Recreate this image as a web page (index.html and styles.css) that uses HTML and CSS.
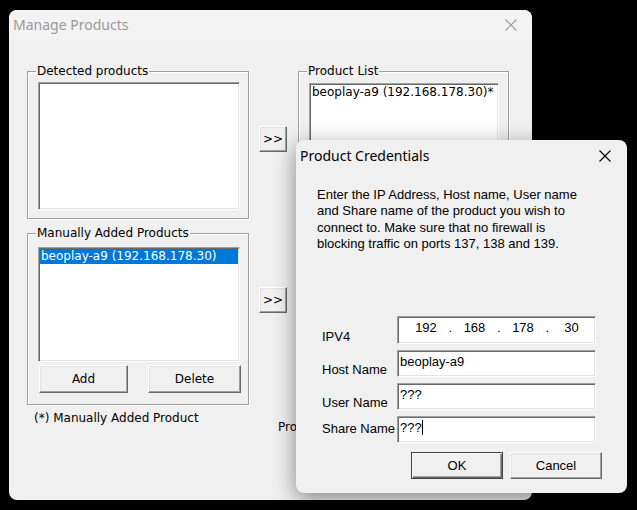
FILE: index.html
```html
<!DOCTYPE html>
<html>
<head>
<meta charset="utf-8">
<title>Manage Products</title>
<link rel="stylesheet" href="styles.css">
</head>
<body>
<div class="desktop">
  <div class="win main">
    <div class="titlebar">
      <span class="title">Manage Products</span>
      <svg class="close" viewBox="0 0 12 12"><path d="M0.5 0.5L11.5 11.5M11.5 0.5L0.5 11.5" stroke="#9a9a9a" stroke-width="1.1" fill="none"/></svg>
    </div>
    <div class="main-body">
      <div class="col-left">
        <div class="group g-detected">
          <span class="legend">Detected products</span>
          <div class="listbox lb-detected"></div>
        </div>
        <div class="group g-manual">
          <span class="legend">Manually Added Products</span>
          <div class="listbox lb-manual">
            <div class="item selected">beoplay-a9 (192.168.178.30)</div>
          </div>
          <div class="btn-row">
            <button class="btn btn-add">Add</button>
            <button class="btn btn-del">Delete</button>
          </div>
        </div>
        <div class="note">(*) Manually Added Product</div>
      </div>
      <div class="col-mid">
        <button class="btn arrow arrow-1">&gt;&gt;</button>
        <button class="btn arrow arrow-2">&gt;&gt;</button>
        <div class="status">Products</div>
      </div>
      <div class="col-right">
        <div class="group g-list">
          <span class="legend">Product List</span>
          <div class="listbox lb-list">
            <div class="item">beoplay-a9 (192.168.178.30)*</div>
          </div>
        </div>
      </div>
    </div>
  </div>

  <div class="win dialog">
    <div class="titlebar">
      <span class="title">Product Credentials</span>
      <svg class="close" viewBox="0 0 12 12"><path d="M0.5 0.5L11.5 11.5M11.5 0.5L0.5 11.5" stroke="#000" stroke-width="1.1" fill="none"/></svg>
    </div>
    <p class="dlg-text">Enter the IP Address, Host name, User name<br>and Share name of the product you wish to<br>connect to. Make sure that no firewall is<br>blocking traffic on ports 137, 138 and 139.</p>
    <div class="form">
      <label class="lbl">IPV4</label>
      <div class="field ip">
        <span class="seg">192</span><span class="dot">.</span><span class="seg">168</span><span class="dot">.</span><span class="seg">178</span><span class="dot">.</span><span class="seg">30</span>
      </div>
      <label class="lbl">Host Name</label>
      <div class="field">beoplay-a9</div>
      <label class="lbl">User Name</label>
      <div class="field">???</div>
      <label class="lbl lbl-last">Share Name</label>
      <div class="field">???<span class="caret"></span></div>
    </div>
    <div class="dlg-btns">
      <button class="dbtn default">OK</button>
      <button class="dbtn">Cancel</button>
    </div>
  </div>
</div>
</body>
</html>
```

FILE: styles.css
```css
* { box-sizing: border-box; }
html, body { margin: 0; padding: 0; }
body {
  background: #000;
  width: 637px;
  height: 510px;
  overflow: hidden;
  font-family: "DejaVu Sans", sans-serif;
  font-size: 12px;
  color: #000;
}
.desktop {
  position: relative;
  width: 637px;
  height: 510px;
  padding: 10px 0 0 9px;
}
.win {
  background: #f0f0f0;
  border-radius: 8px;
}
.main {
  width: 523px;
  height: 490px;
  overflow: hidden;
}
.titlebar {
  display: flex;
  align-items: center;
  justify-content: space-between;
  padding-left: 4px;
  font-family: "Noto Sans", sans-serif;
  font-size: 14px;
}
.main .titlebar {
  height: 30px;
  line-height: 30px;
  color: #999;
  background: #f3f3f3;
}
.close {
  width: 12px;
  height: 12px;
  margin-right: 15px;
}
.main-body {
  display: flex;
  padding: 31px 0 0 18px;
}
.col-left {
  width: 223px;
  margin-right: 9px;
  display: flex;
  flex-direction: column;
}
.col-mid {
  width: 28px;
  margin-right: 11px;
  display: flex;
  flex-direction: column;
}
.col-right { width: 211px; }

.group {
  position: relative;
  border: 1px solid #a0a0a0;
  box-shadow: inset 1px 1px 0 #fff, 1px 1px 0 #fff;
}
.legend {
  position: absolute;
  top: -8px;
  left: 8px;
  padding: 0 1px;
  background: #f0f0f0;
  line-height: 15px;
  white-space: nowrap;
}
.g-detected {
  width: 222px;
  height: 148px;
  padding: 10px 0 0 10px;
}
.g-manual {
  width: 222px;
  height: 172px;
  margin-top: 14px;
  padding: 13px 0 0 10px;
}
.g-list {
  width: 211px;
  height: 334px;
  padding: 11px 0 0 10px;
}
.listbox {
  background: #fff;
  border: 1px solid;
  border-color: #a0a0a0 #fff #fff #a0a0a0;
  box-shadow: inset 1px 1px 0 #696969, inset -1px -1px 0 #e3e3e3;
  padding: 1px;
}
.lb-detected { width: 202px; height: 128px; }
.lb-manual { width: 202px; height: 115px; }
.lb-list { width: 190px; height: 312px; }
.item {
  line-height: 15px;
  padding-left: 1px;
  white-space: nowrap;
}
.item.selected {
  background: #0078d7;
  color: #fff;
}
.btn-row {
  display: flex;
  margin-top: 3px;
}
.btn {
  font: inherit;
  color: #000;
  background: #f0f0f0;
  border: 1px solid;
  border-color: #fff #696969 #696969 #fff;
  box-shadow: inset -1px -1px 0 #a0a0a0, inset 1px 1px 0 #e3e3e3;
  padding: 0;
}
.btn-add { width: 89px; height: 28px; margin-left: 1px; }
.btn-del { width: 93px; height: 28px; margin-left: 20px; }
.note {
  margin-top: 6px;
  padding-left: 7px;
  line-height: 15px;
}
.arrow {
  width: 28px;
  height: 26px;
  line-height: 15px;
}
.arrow-1 { margin-top: 55px; }
.arrow-2 { margin-top: 135px; }
.status {
  margin-top: 107px;
  margin-left: 19px;
  width: 18px;
  overflow: hidden;
  line-height: 15px;
  white-space: nowrap;
}

/* dialog */
.dialog {
  position: absolute;
  left: 296px;
  top: 140px;
  width: 331px;
  height: 353px;
  box-shadow: 0 6px 22px rgba(0, 0, 0, 0.45);
  font-family: "Liberation Sans", Arial, sans-serif;
  font-size: 13px;
}
.dialog .titlebar {
  height: 32px;
  line-height: 32px;
  color: #000;
}
.dialog .close { margin-right: 16px; }
.dlg-text {
  margin: 15px 0 0 21px;
  line-height: 16.4px;
}
.form {
  display: grid;
  grid-template-columns: 75px 199px;
  grid-template-rows: 28px 27px 27px 27px;
  row-gap: 6px;
  margin: 63px 0 0 26px;
}
.lbl {
  align-self: end;
  line-height: 16.4px;
  margin-bottom: -2px;
  white-space: nowrap;
}
.lbl-last { margin-bottom: 5px; }
.field {
  background: #fff;
  border: 1px solid;
  border-color: #a0a0a0 #fff #fff #a0a0a0;
  box-shadow: inset 1px 1px 0 #696969, inset -1px -1px 0 #e3e3e3;
  padding: 3px 2px 0;
  line-height: 16.4px;
  white-space: nowrap;
}
.ip {
  display: flex;
  padding-left: 11px;
}
.seg { width: 34px; text-align: center; }
.dot { width: 14.5px; text-align: center; }
.caret {
  display: inline-block;
  width: 1px;
  height: 15px;
  background: #000;
  vertical-align: -3px;
}
.dlg-btns {
  display: flex;
  justify-content: flex-end;
  gap: 7px;
  margin: 9px 25px 0 0;
}
.dbtn {
  width: 92px;
  height: 27px;
  font: inherit;
  color: #000;
  background: #f0f0f0;
  border: 1px solid;
  border-color: #fff #696969 #696969 #fff;
  box-shadow: inset -1px -1px 0 #a0a0a0, inset 1px 1px 0 #e3e3e3;
  padding: 0;
}
.dbtn.default {
  border-color: #404040;
  box-shadow: inset 1px 1px 0 #fff, inset -1px -1px 0 #696969, inset -2px -2px 0 #a0a0a0;
}
```
